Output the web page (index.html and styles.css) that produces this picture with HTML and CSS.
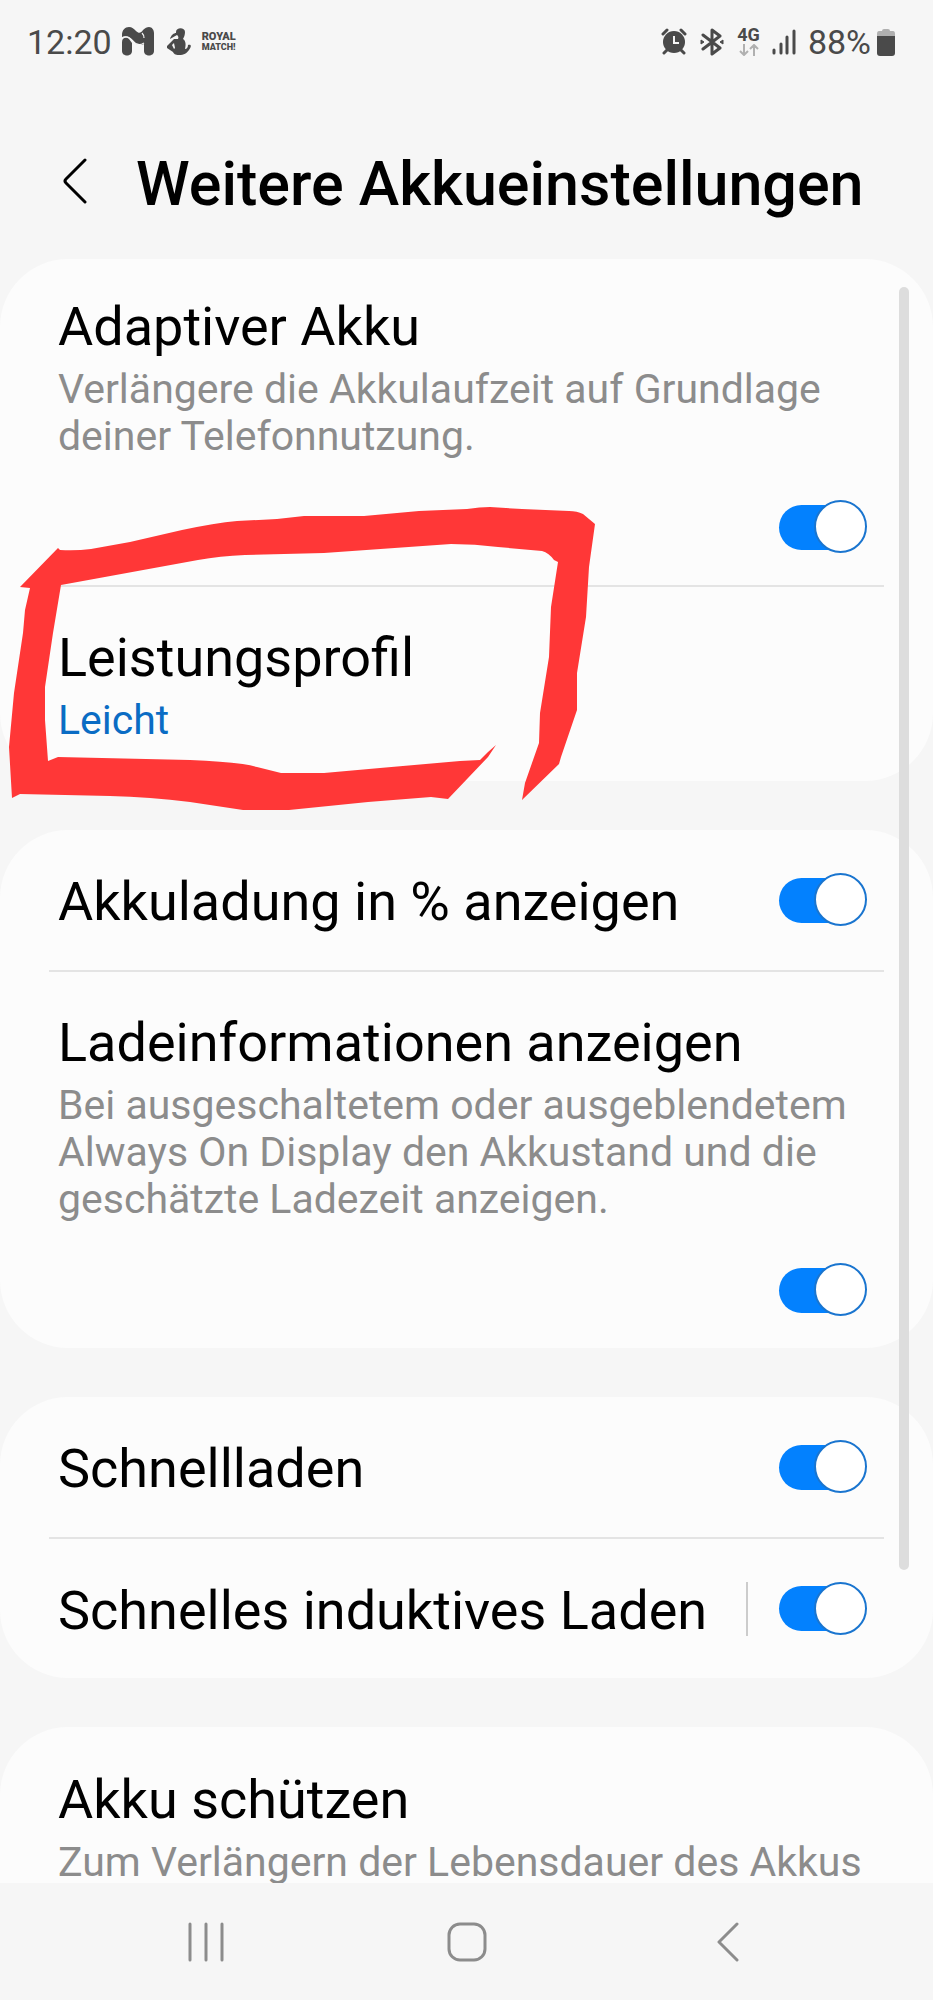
FILE: index.html
```html
<!DOCTYPE html>
<html lang="de">
<head>
<meta charset="utf-8">
<meta name="viewport" content="width=device-width, initial-scale=1">
<title>Weitere Akkueinstellungen</title>
<link rel="stylesheet" href="styles.css">
</head>
<body>
<div class="screen">
  <div class="status">
    <div class="status-left">
      <span class="status-text">12:20</span>
      <svg width="34" height="32" viewBox="0 0 34 32" aria-hidden="true">
        <path d="M0 9C0 4 3 1 7 1C10 1 12 3 14 5C17 8 19 7 21 4C23 2 25 1 27 1C30 1 32 4 32 7V25C32 31 22 31 22 25V18C18 20 14 19 11 15C8 11 5 9 0 11Z" fill="#4a4a4a"/>
        <path d="M0 16C0 11 5 11 7 13L10 17V25C10 31 0 31 0 25Z" fill="#4a4a4a"/>
        <path d="M0 12C5 9 8 12 11 15C15 20 19 19 22 17M22 12Q22 9 20 7" fill="none" stroke="#f6f6f6" stroke-width="1.2"/>
      </svg>
      <svg width="26" height="30" viewBox="0 0 26 30" aria-hidden="true">
        <path d="M10 5C10 0 19 0 19 5C19 8 18 10 17 12C20 14 20 18 19 22C21 22 22 20 22 18C25 17 26 19 23 23C21 26 18 28 13 28C9 28 8 27 7 25L1 21V19L8 12H12C13 10 12 9 11 8L4 12C5 8 8 6 10 6Z" fill="#4a4a4a"/>
        <path d="M6 18L8 16L9 21L8 22Z" fill="#f6f6f6"/>
      </svg>
      <span class="game-badge"><span>ROYAL</span><span class="game-small">MATCH!</span></span>
    </div>
    <div class="status-right">
      <svg width="26" height="28" viewBox="0 0 26 28" aria-hidden="true">
        <circle cx="13" cy="14" r="11" fill="#4a4a4a"/>
        <path d="M2 6L6 2M24 6L20 2M6 22L3 25M20 22L23 25" stroke="#4a4a4a" stroke-width="3" stroke-linecap="round"/>
        <path d="M13 8V15H18" fill="none" stroke="#f6f6f6" stroke-width="2"/>
      </svg>
      <svg width="26" height="28" viewBox="0 0 26 28" aria-hidden="true">
        <path d="M4 7L21 20L13 26V2L21 8L4 21" fill="none" stroke="#4a4a4a" stroke-width="3" stroke-linejoin="round" stroke-linecap="round"/>
        <path d="M2 12L5 14L2 16ZM24 12L21 14L24 16Z" fill="#4a4a4a" stroke="#4a4a4a"/>
      </svg>
      <span class="network"><span>4G</span>
        <svg width="20" height="12" viewBox="0 0 20 12" aria-hidden="true"><path d="M5 0V11M1 7L5 11L9 7M15 12V1M11 5L15 1L19 5" fill="none" stroke="#b0b0b0" stroke-width="2"/></svg>
      </span>
      <svg width="24" height="26" viewBox="0 0 24 26" aria-hidden="true"><path d="M2 21V24M9 15V24M15 8V24M22 2V24" stroke="#4a4a4a" stroke-width="3" stroke-linecap="round"/></svg>
      <span class="status-text charge">88%</span>
      <svg width="20" height="28" viewBox="0 0 20 28" aria-hidden="true"><path d="M6 3Q6 1 8 1H12Q14 1 14 3H17Q19 3 19 6V9H1V6Q1 3 3 3Z" fill="#b0b0b0"/><path d="M1 8H19V25Q19 28 16 28H4Q1 28 1 25Z" fill="#4a4a4a"/></svg>
    </div>
  </div>

  <header class="header">
    <button class="back" type="button" aria-label="Zurück">
      <svg width="26" height="46" viewBox="0 0 26 46" aria-hidden="true"><path d="M23 2L4 21Q2 23 4 25L23 44" fill="none" stroke="#000" stroke-width="3" stroke-linecap="round"/></svg>
    </button>
    <h1>Weitere Akkueinstellungen</h1>
  </header>

  <main class="list">
    <section class="card card-first">
      <div class="row row-stacked">
        <label class="title" for="adaptive">Adaptiver Akku</label>
        <p class="summary">Verlängere die Akkulaufzeit auf Grundlage deiner Telefonnutzung.</p>
        <input class="switch" id="adaptive" type="checkbox" role="switch" checked>
      </div>
      <hr class="divider">
      <div class="row row-stacked row-link">
        <a class="title" href="#profil">Leistungsprofil</a>
        <p class="summary value">Leicht</p>
      </div>
      <svg class="marker" width="600" height="335" viewBox="0 0 600 335" aria-hidden="true">
        <path fill="#ff3737" d="M58 68L60 70Q76 71 91 69L130 62L182 50Q215 43 237 41L277 39L304 36L364 36L419 31L467 29Q480 27 490 27L522 29L569 31Q577 31 583 34L595 44L589 87L586 137L577 193L577 230L561 277L559 284L522 320L525 303L539 263L540 233L549 177L551 127L558 82L554 80Q549 73 542 71L498 67Q475 64 451 64L324 73L245 75Q220 76 198 80L61 105L53 153L45 207V240L48 281L58 277L190 280Q240 282 257 287L281 293H324L380 288L460 281L480 280L488 272L496 265L488 277L448 319L431 317L368 322L289 330H243L190 322Q150 317 110 316L20 314L12 318L9 267L14 213L23 153L25 130L30 108L20 107Z"/>
      </svg>
    </section>

    <section class="card">
      <div class="row">
        <label class="title" for="percent">Akkuladung in % anzeigen</label>
        <input class="switch" id="percent" type="checkbox" role="switch" checked>
      </div>
      <hr class="divider">
      <div class="row row-stacked">
        <label class="title" for="info">Ladeinformationen anzeigen</label>
        <p class="summary">Bei ausgeschaltetem oder ausgeblendetem Always On Display den Akkustand und die geschätzte Ladezeit anzeigen.</p>
        <input class="switch" id="info" type="checkbox" role="switch" checked>
      </div>
    </section>

    <section class="card">
      <div class="row">
        <label class="title" for="fast">Schnellladen</label>
        <input class="switch" id="fast" type="checkbox" role="switch" checked>
      </div>
      <hr class="divider">
      <div class="row">
        <label class="title" for="wireless">Schnelles induktives Laden</label>
        <span class="separator"></span>
        <input class="switch" id="wireless" type="checkbox" role="switch" checked>
      </div>
    </section>

    <section class="card">
      <div class="row row-stacked row-last">
        <a class="title" href="#schuetzen">Akku schützen</a>
        <p class="summary">Zum Verlängern der Lebensdauer des Akkus</p>
      </div>
    </section>
    <div class="scrollbar"></div>
  </main>

  <nav class="navbar">
    <button type="button" aria-label="Letzte Apps"><svg width="36" height="40" viewBox="0 0 36 40" aria-hidden="true"><path d="M2 2V38M18 2V38M34 2V38" stroke="#8c8c8c" stroke-width="3" stroke-linecap="round"/></svg></button>
    <button type="button" aria-label="Startseite"><svg width="40" height="40" viewBox="0 0 40 40" aria-hidden="true"><rect x="2" y="2" width="36" height="36" rx="11" fill="none" stroke="#8c8c8c" stroke-width="3"/></svg></button>
    <button type="button" aria-label="Zurück"><svg width="24" height="40" viewBox="0 0 24 40" aria-hidden="true"><path d="M21 2L3 20L21 38" fill="none" stroke="#8c8c8c" stroke-width="3" stroke-linecap="round" stroke-linejoin="round"/></svg></button>
  </nav>
</div>
</body>
</html>
```
FILE: styles.css
```css
*,
*::before,
*::after {
  box-sizing: border-box;
}

body {
  margin: 0;
  background: #f6f6f6;
  color: #000;
  font-family: Roboto, "Liberation Sans", sans-serif;
}

button {
  padding: 0;
  border: 0;
  background: none;
}

svg {
  display: block;
}

.screen {
  display: flex;
  flex-direction: column;
  height: 100vh;
}

.status {
  display: flex;
  justify-content: space-between;
  height: 84px;
  padding: 0 37px 0 27px;
  color: #4a4a4a;
}

.status-left,
.status-right {
  display: flex;
  align-items: center;
}

.status-left {
  gap: 10px;
}

.status-right {
  gap: 12px;
}

.status-text {
  font-size: 34px;
  line-height: 40px;
}

.charge {
  margin-right: -7px;
}

.game-badge {
  display: flex;
  flex-direction: column;
  font-size: 11px;
  font-weight: 900;
  line-height: 10px;
}

.game-small {
  font-size: 9px;
}

.network {
  display: flex;
  flex-direction: column;
  align-items: center;
  gap: 2px;
  font-size: 18px;
  font-weight: 700;
  line-height: 14px;
}

.header {
  display: flex;
  align-items: center;
  height: 175px;
  padding: 25px 24px 0 62px;
}

.back {
  flex: none;
  width: 74px;
  padding-bottom: 6px;
}

h1 {
  margin: 0;
  font-size: 61px;
  font-weight: 500;
  line-height: 72px;
}

.list {
  position: relative;
  display: flex;
  flex: 1;
  flex-direction: column;
  gap: 49px;
  min-height: 0;
  overflow: hidden;
}

.card {
  position: relative;
  flex: none;
  border-radius: 68px;
  background: #fcfcfc;
}

.row {
  display: flex;
  align-items: center;
  min-height: 140px;
  padding: 0 66px 0 58px;
}

.divider + .row {
  min-height: 139px;
}

.row-stacked {
  flex-direction: column;
  align-items: stretch;
  padding-top: 36px;
  padding-bottom: 31px;
}

.card-first .row:first-child {
  padding-top: 33px;
}

.row-link {
  padding-bottom: 37px;
}

.row-last {
  padding-top: 38px;
  padding-bottom: 84px;
}

.title {
  flex: 1;
  padding-top: 4px;
  color: #000;
  font-size: 54px;
  line-height: 62px;
  text-decoration: none;
}

.row-stacked .title {
  flex: none;
}

.summary {
  margin: 8px 0 0;
  color: #8c8c8c;
  font-size: 41px;
  line-height: 47px;
}

.value {
  color: #0a6cc4;
}

.divider {
  height: 2px;
  margin: 0 49px;
  border: 0;
  background: #e4e4e4;
}

.separator {
  width: 2px;
  height: 54px;
  margin-right: 31px;
  background: #ccc;
}

.switch {
  position: relative;
  display: flex;
  align-items: center;
  flex: none;
  width: 88px;
  height: 54px;
  margin: 0;
  appearance: none;
}

.switch::before {
  content: "";
  width: 76px;
  height: 45px;
  border-radius: 23px;
  background: #0381fe;
}

.switch::after {
  content: "";
  position: absolute;
  top: 0;
  right: 0;
  width: 53px;
  height: 53px;
  border: 2px solid #1a75cf;
  border-radius: 50%;
  background: #fff;
}

.row-stacked .switch {
  align-self: flex-end;
  margin-top: 40px;
}

.marker {
  position: absolute;
  top: 221px;
  left: 0;
  pointer-events: none;
}

.scrollbar {
  position: absolute;
  top: 28px;
  right: 24px;
  width: 10px;
  height: 79%;
  border-radius: 5px;
  background: #ddd;
}

.navbar {
  display: grid;
  grid-template-columns: repeat(3, 1fr);
  height: 117px;
  padding: 0 75px;
}

.navbar button {
  display: grid;
  place-items: center;
}
```
